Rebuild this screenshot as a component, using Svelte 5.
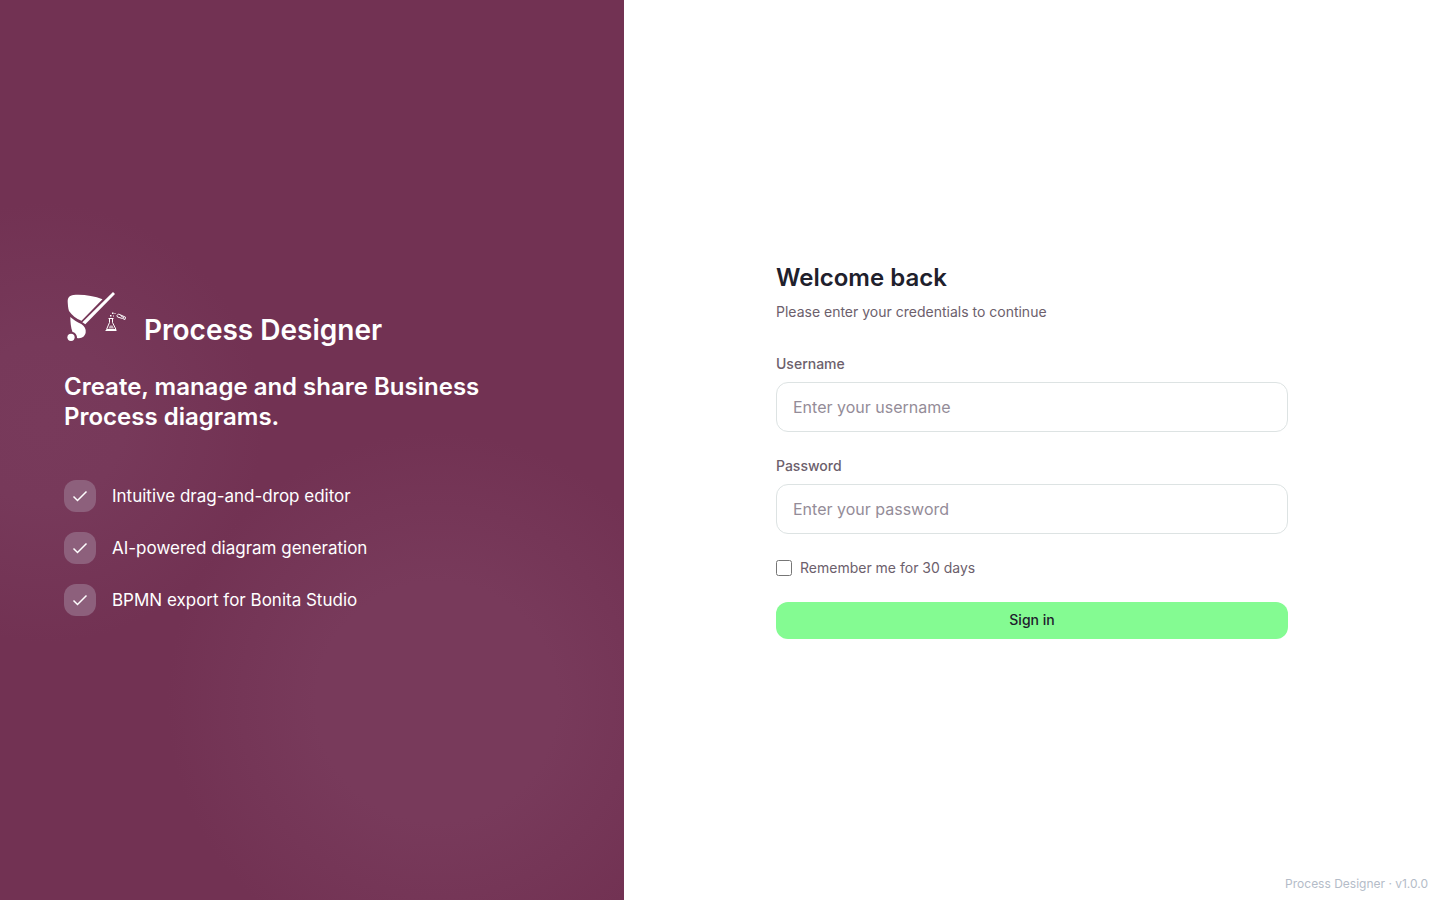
<script>
  const features = [
    'Intuitive drag-and-drop editor',
    'AI-powered diagram generation',
    'BPMN export for Bonita Studio'
  ];

  let username = '';
  let password = '';
  let remember = false;

  function signIn() {
    password = '';
  }
</script>

<div class="login">
  <section class="brand">
    <div class="brand-row">
      <svg class="logo" viewBox="0 0 64 64" aria-hidden="true">
        <g fill="#fff">
          <path d="M3.700 18C3.500 13.500 5.500 11.400 9.500 11C19 10.200 30 12 38.500 15.200L17.500 36.800C12 34.500 8 31.500 5 27C4 24 3.900 21 3.700 18Z" />
          <path d="M49 8L51 10L21.300 40.300L18.300 38.300Z" />
          <path d="M6.300 33C9 35.500 13 38 17.300 40C20.500 42 22.200 45 21.700 48.500C21 52.500 17.500 55 13 54C13.200 51.500 11.500 48.500 8.500 48C6.800 43.500 6.400 38 6.300 33Z" />
          <circle cx="7" cy="53.300" r="3.600" />
        </g>
        <g fill="none" stroke="#fff" stroke-width="1">
          <path d="M44.500 34.500h5M45.500 35v3.500L42.500 45.500h9.500L48.500 38.500V35" />
          <path d="M41.500 46.500h11" />
          <path d="M53.500 33L53 31.500L54.500 30L61.500 33.200L61 35.500L58.500 34.500Z" />
          <path d="M56.500 31.500l3.500 2.500" />
        </g>
        <path d="M44.500 44.500l1.500-3h2.500l1.500 3z" fill="#fff" opacity="0.600" />
        <g fill="#fff">
          <rect x="46" y="31" width="1.500" height="1.500" />
          <rect x="48" y="28.500" width="1.500" height="1.500" />
          <rect x="49" y="31.500" width="1" height="1" />
          <rect x="50.500" y="29" width="1" height="1" />
        </g>
      </svg>
      <h1>Process Designer</h1>
    </div>
    <p class="tagline">Create, manage and share Business Process diagrams.</p>
    <ul class="features">
      {#each features as feature}
        <li>
          <span class="check">
            <svg viewBox="0 0 16 16" aria-hidden="true">
              <path d="M1.500 8.500l4 4L14.500 3.500" />
            </svg>
          </span>
          {feature}
        </li>
      {/each}
    </ul>
  </section>

  <main class="panel">
    <form on:submit|preventDefault={signIn}>
      <h2>Welcome back</h2>
      <p class="hint">Please enter your credentials to continue</p>

      <div class="field">
        <label for="username">Username</label>
        <input id="username" type="text" placeholder="Enter your username" autocomplete="username" bind:value={username} />
      </div>
      <div class="field">
        <label for="password">Password</label>
        <input id="password" type="password" placeholder="Enter your password" autocomplete="current-password" bind:value={password} />
      </div>

      <label class="remember">
        <input type="checkbox" bind:checked={remember} />
        Remember me for 30 days
      </label>

      <button type="submit">Sign in</button>
    </form>
    <footer>Process Designer · v1.0.0</footer>
  </main>
</div>

<style>
  :global(body) {
    margin: 0;
  }
  .login {
    display: grid;
    grid-template-columns: 13fr 17fr;
    min-height: 100vh;
    font-family: Inter, "Liberation Sans", sans-serif;
    background: #fff;
  }
  h1, h2, p, ul {
    margin: 0;
    padding: 0;
  }

  .brand {
    display: flex;
    flex-direction: column;
    justify-content: center;
    padding: 48px 64px;
    color: #fff;
    background:
      radial-gradient(circle at 7% 47%, #783a5b, #77395a 80px, rgba(120, 58, 91, 0) 220px),
      radial-gradient(circle at 70% 78%, #783a5b, #783a5b 120px, rgba(120, 58, 91, 0) 270px),
      #723253;
  }
  .brand-row {
    display: flex;
    align-items: flex-end;
    gap: 16px;
    margin-bottom: 24px;
  }
  .logo {
    width: 64px;
    height: 64px;
  }
  h1 {
    font-size: 28px;
    line-height: 36px;
    font-weight: 600;
  }
  .tagline {
    font-size: 24px;
    line-height: 30px;
    font-weight: 600;
    margin-bottom: 48px;
    max-width: 448px;
  }
  .features {
    display: flex;
    flex-direction: column;
    gap: 20px;
    list-style: none;
    font-size: 17px;
    line-height: 28px;
  }
  .features li {
    display: flex;
    align-items: center;
    gap: 16px;
  }
  .check {
    display: flex;
    align-items: center;
    justify-content: center;
    width: 32px;
    height: 32px;
    border-radius: 12px;
    background: #8d607c;
  }
  .check svg {
    width: 16px;
    height: 16px;
    fill: none;
    stroke: #fff;
    stroke-width: 1.500;
  }

  .panel {
    position: relative;
    display: flex;
    align-items: center;
    justify-content: center;
    padding: 48px;
  }
  form {
    display: flex;
    flex-direction: column;
    width: 100%;
    max-width: 512px;
    font-size: 14px;
    line-height: 20px;
    color: #6c606c;
  }
  h2 {
    font-size: 24px;
    line-height: 32px;
    font-weight: 600;
    color: #20202c;
    margin-bottom: 8px;
  }
  .hint {
    margin-bottom: 32px;
  }
  .field {
    display: flex;
    flex-direction: column;
    gap: 8px;
    margin-bottom: 24px;
  }
  .field label {
    font-weight: 500;
  }
  .field input {
    box-sizing: border-box;
    height: 50px;
    padding: 0 16px;
    border: 1px solid #dde3e3;
    border-radius: 12px;
    background: #fff;
    font: inherit;
    font-size: 16px;
    color: #20202c;
  }
  .field input::placeholder {
    color: #948c98;
  }
  .remember {
    display: flex;
    align-items: center;
    gap: 8px;
    margin-bottom: 24px;
  }
  .remember input {
    width: 16px;
    height: 16px;
    margin: 0;
  }
  button {
    height: 37px;
    border: 0;
    border-radius: 12px;
    background: #84fb92;
    color: #20202c;
    font: inherit;
    font-weight: 500;
    cursor: pointer;
  }
  footer {
    position: absolute;
    right: 12px;
    bottom: 8px;
    font-size: 12px;
    line-height: 16px;
    color: #b4bcc8;
  }
</style>
